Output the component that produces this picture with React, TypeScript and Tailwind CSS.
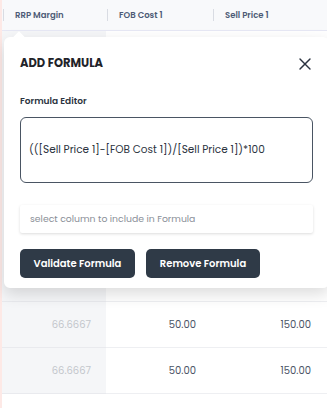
import { X } from 'lucide-react'

const rows = [
  { margin: '66.6667', cost: '50.00', price: '150.00' },
  { margin: '66.6667', cost: '50.00', price: '150.00' },
]

function HeaderCell({ label }: { label: string }) {
  return (
    <div className="flex items-center h-full">
      <span className="w-px h-[12px] bg-[#d9dce3]" />
      <span className="pl-[11px] text-[8.5px] font-semibold text-[#4d5b76]">{label}</span>
    </div>
  )
}

export default function App() {
  return (
    <div className="relative w-[327px] h-[408px] overflow-hidden bg-white font-['Poppins','Open_Sans',sans-serif]">
      <div className="border-l-2 border-[#fde9e6] h-full">
        <div className="grid grid-cols-[104px_106px_1fr] h-[31px] pl-px bg-[#f8f9fb] border-b border-[#e6e7f4]">
          <HeaderCell label="RRP Margin" />
          <HeaderCell label="FOB Cost 1" />
          <HeaderCell label="Sell Price 1" />
        </div>
        <div className="grid grid-cols-[104px_106px_1fr]">
          <div className="bg-[#f5f6f8] h-[271px] border-b border-[#e9eaee]" />
          <div className="h-[271px] border-b border-[#eeeff2]" />
          <div className="h-[271px] border-b border-[#eeeff2]" />
          {rows.map((r, i) => (
            <div key={i} className="contents">
              <div className="bg-[#f5f6f8] h-[46px] flex items-center justify-end pr-[15px] text-[10px] text-[#c3c6cc] border-b border-[#e9eaee]">
                {r.margin}
              </div>
              <div className="h-[46px] flex items-center justify-end pr-[16px] text-[10px] text-[#4b5466] border-b border-[#eeeff2]">
                {r.cost}
              </div>
              <div className="h-[46px] flex items-center justify-end pr-[16px] text-[10px] text-[#4b5466] border-b border-[#eeeff2]">
                {r.price}
              </div>
            </div>
          ))}
        </div>
      </div>

      <div className="absolute left-[4px] top-[37px] w-[325px] h-[251px] rounded-[6px] bg-white shadow-[0_6px_16px_rgba(0,0,0,0.14)] px-4 pt-[18px]">
        <div className="absolute -top-[4px] left-[11px] w-[8px] h-[8px] bg-white rotate-45" />
        <div className="flex items-center justify-between h-[18px]">
          <h2 className="text-[11.5px] font-bold text-[#1f2329]">ADD FORMULA</h2>
          <X className="w-[20px] h-[20px] -mr-[2px] text-[#2b3340]" strokeWidth={1.7} />
        </div>
        <p className="mt-[22px] text-[9px] font-semibold text-[#2b3340]">Formula Editor</p>
        <div className="mt-[8px] h-[66px] rounded-[6px] border border-[#4a5563] flex items-center px-[8px] text-[10.5px] text-[#2b3340]">
          (([Sell Price 1]-[FOB Cost 1])/[Sell Price 1])*100
        </div>
        <div className="mt-[22px] h-[28px] rounded-[2px] bg-white shadow-[0_1px_3px_rgba(0,0,0,0.14)] flex items-center px-[10px] text-[9.3px] text-[#8a8f98]">
          select column to include in Formula
        </div>
        <div className="mt-[16px] flex gap-[11px]">
          <button className="h-[29px] w-[115px] rounded-[5px] bg-[#2f3a47] text-white text-[10px] font-semibold">
            Validate Formula
          </button>
          <button className="h-[29px] w-[114px] rounded-[5px] bg-[#2f3a47] text-white text-[10px] font-semibold">
            Remove Formula
          </button>
        </div>
      </div>
    </div>
  )
}
